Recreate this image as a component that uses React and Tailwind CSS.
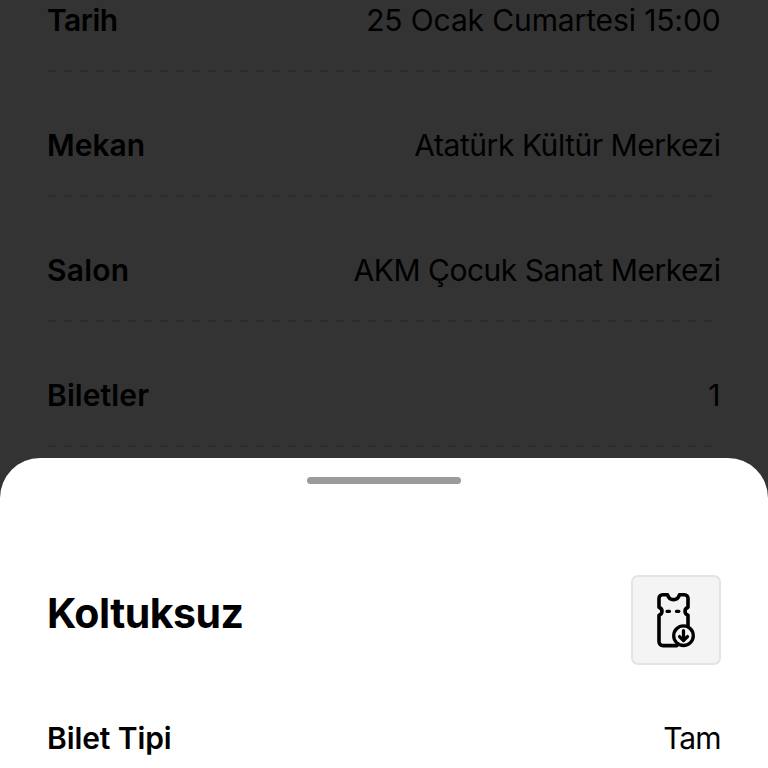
import React from 'react';

const eventDetails = [
  { label: 'Tarih', value: '25 Ocak Cumartesi 15:00', labelClass: 'tracking-[-0.55px]', valueClass: 'tracking-[-0.12px]' },
  { label: 'Mekan', value: 'Atatürk Kültür Merkezi', labelClass: '', valueClass: 'tracking-[-0.45px]' },
  { label: 'Salon', value: 'AKM Çocuk Sanat Merkezi', labelClass: 'tracking-[0.2px]', valueClass: 'tracking-[-0.48px]' },
  { label: 'Biletler', value: '1', labelClass: 'tracking-[0.1px]', valueClass: '' },
];

function DetailRow({ label, value, labelClass = '', valueClass = '' }) {
  return (
    <div className="-mr-[0.5px] -ml-px flex items-center justify-between text-[30px] leading-[36px] text-black">
      <span className={`font-semibold ${labelClass}`}>{label}</span>
      <span className={valueClass}>{value}</span>
    </div>
  );
}

function TicketDownloadIcon() {
  return (
    <svg width="42" height="58" viewBox="0 0 42 58" fill="none" stroke="#000" strokeWidth="3.6" strokeLinecap="round" strokeLinejoin="round">
      <path d="M22 54.600H8a4 4 0 0 1-4-4V24.300c1.900-.7 3-2.100 3-4s-1.100-3.300-3-4V7.200a3.500 3.500 0 0 1 3.500-3.500h5c.9 2.900 3.100 4.900 6 4.900s5.100-2 6-4.900h5a3.500 3.500 0 0 1 3.500 3.500v9.100c-1.900.7-3 2.100-3 4s1.100 3.300 3 4V35" />
      <path d="M12 20.300h2.500M21.400 20.300h2.500" strokeWidth="3.200" />
      <circle cx="28.500" cy="44.700" r="9.800" strokeWidth="3.300" />
      <path d="M28.500 39.700v9.600M24.500 45.600l4 3.900 4-3.900" strokeWidth="3.300" />
    </svg>
  );
}

export default function App() {
  return (
    <div className="flex h-[768px] w-[768px] flex-col overflow-hidden bg-[#333333] font-['Inter','Liberation_Sans',sans-serif]">
      <div className="-mt-[54px] h-[512px] shrink-0 px-12">
        {eventDetails.map((item) => (
          <div key={item.label} className="flex h-[125px] flex-col justify-end">
            <DetailRow {...item} />
            <div className="mt-[32px] -mb-px h-[2px] w-[672px] bg-[repeating-linear-gradient(90deg,#2c2c2c_0_8px,transparent_8px_16px)]" />
          </div>
        ))}
      </div>

      <div className="flex grow flex-col rounded-t-[40px] bg-white px-12">
        <div className="mt-[19px] h-[7px] w-[154px] self-center rounded-full bg-[#9b9b9b]" />
        <div className="-mr-px -ml-px mt-[91px] flex h-[90px] items-center justify-between">
          <h2 className="-mt-3.5 text-[41px] leading-[50px] font-bold tracking-[-0.5px] text-black">Koltuksuz</h2>
          <button className="flex h-[90px] w-[90px] items-center justify-center rounded-[7px] border-2 border-[#e4e4e4] bg-[#f4f4f4]">
            <TicketDownloadIcon />
          </button>
        </div>
        <div className="mt-[55px]">
          <DetailRow label="Bilet Tipi" value="Tam" labelClass="tracking-[-0.1px]" valueClass="tracking-[-1px]" />
        </div>
      </div>
    </div>
  );
}
